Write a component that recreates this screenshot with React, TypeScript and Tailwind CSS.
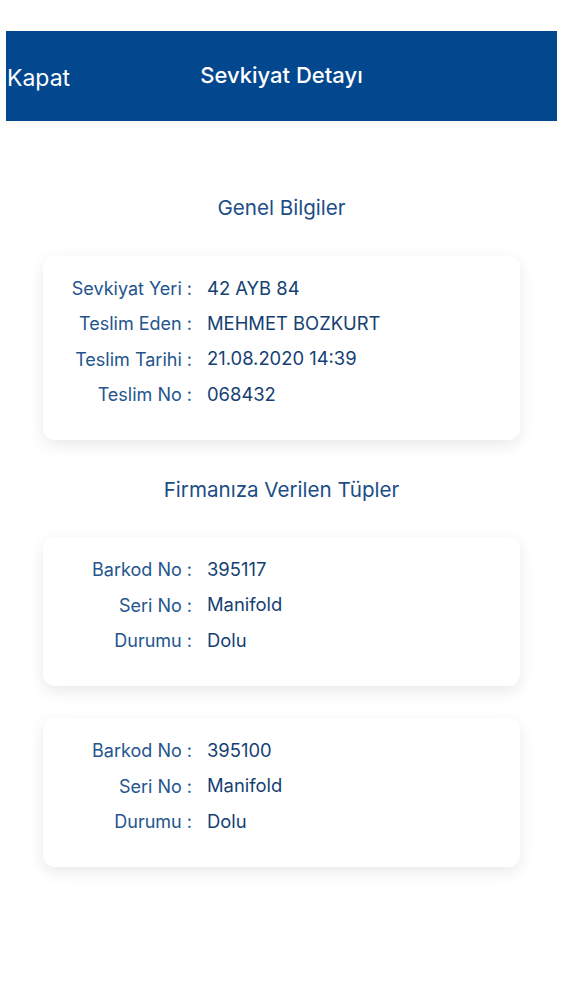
import React from "react";

type Row = { label: string; value: string };

const genel: Row[] = [
  { label: "Sevkiyat Yeri :", value: "42 AYB 84" },
  { label: "Teslim Eden :", value: "MEHMET BOZKURT" },
  { label: "Teslim Tarihi :", value: "21.08.2020 14:39" },
  { label: "Teslim No :", value: "068432" },
];

const tupler: Row[][] = [
  [
    { label: "Barkod No :", value: "395117" },
    { label: "Seri No :", value: "Manifold" },
    { label: "Durumu :", value: "Dolu" },
  ],
  [
    { label: "Barkod No :", value: "395100" },
    { label: "Seri No :", value: "Manifold" },
    { label: "Durumu :", value: "Dolu" },
  ],
];

function InfoCard({ rows }: { rows: Row[] }) {
  return (
    <div className="mx-[43px] rounded-xl bg-white pt-[15px] pb-[28px] shadow-[0_5px_16px_rgba(0,0,0,0.09)]">
      {rows.map((r) => (
        <div key={r.label} className="flex h-[35.3px] items-center text-[18px]">
          <span className="w-[149px] shrink-0 text-right text-[#24558e]">{r.label}</span>
          <span className="ml-[15px] text-[18.4px] text-[#153f73]">{r.value}</span>
        </div>
      ))}
    </div>
  );
}

export default function App() {
  return (
    <div
      className="min-h-screen bg-white pt-[31px] pb-10"
      style={{ fontFamily: "Inter, 'Noto Sans', sans-serif" }}
    >
      {/* header bar */}
      <div className="relative mx-[6px] flex h-[90px] items-center justify-center bg-[#03478f] shadow-[0_3px_6px_rgba(0,0,0,0.04)]">
        <button className="absolute left-[1px] top-[36px] text-[23px] leading-none text-white">Kapat</button>
        <h1 className="-mt-[2px] text-[22px] font-medium text-white">Sevkiyat Detayı</h1>
      </div>

      <h2 className="mt-[73px] text-center text-[20.6px] leading-[28px] text-[#1c4d87]">Genel Bilgiler</h2>
      <div className="mt-[34px]">
        <InfoCard rows={genel} />
      </div>

      <h2 className="mt-[36px] text-center text-[20.6px] leading-[28px] text-[#1c4d87]">
        Firmanıza Verilen Tüpler
      </h2>
      <div className="mt-[33px] flex flex-col gap-[32px]">
        {tupler.map((t, i) => (
          <InfoCard key={i} rows={t} />
        ))}
      </div>
    </div>
  );
}
